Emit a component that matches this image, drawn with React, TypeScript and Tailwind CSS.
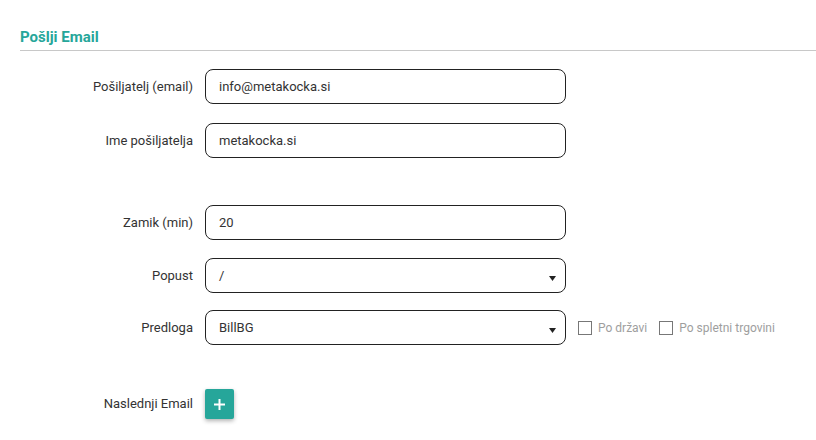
import React from "react";

const font = { fontFamily: "Roboto, 'Noto Sans', sans-serif" };

function Row({ label, children, className = "" }: { label: string; children: React.ReactNode; className?: string }) {
  return (
    <div className={`flex items-center ${className}`}>
      <label className="w-[193px] shrink-0 text-right text-[13px] text-[#333]">{label}</label>
      <div className="ml-[12px] flex items-center">{children}</div>
    </div>
  );
}

function TextBox({ value }: { value: string }) {
  return (
    <div className="flex h-[35px] w-[361px] items-center rounded-[8px] border border-[#222] px-[13px] text-[13px] text-[#333]">
      {value}
    </div>
  );
}

function SelectBox({ value }: { value: string }) {
  return (
    <div className="flex h-[35px] w-[361px] items-center justify-between rounded-[8px] border border-[#222] pl-[13px] pr-[9px] text-[13px] text-[#333]">
      <span>{value}</span>
      <svg width="7" height="5" viewBox="0 0 7 5" className="mt-[5px]">
        <path d="M0 0h7L3.5 5z" fill="#222" />
      </svg>
    </div>
  );
}

function Check({ label }: { label: string }) {
  return (
    <span className="flex items-center gap-[6px] text-[12px] text-[#9e9e9e]">
      <span className="h-[14px] w-[14px] border border-[#777] bg-white" />
      {label}
    </span>
  );
}

export default function App() {
  return (
    <div className="h-[440px] w-[816px] overflow-hidden bg-white" style={font}>
      <div className="pl-[20px] pt-[29px]">
        <h2 className="border-b border-[#c8c8c8] pb-[4px] text-[15px] font-bold leading-[17px] text-[#26a69a]">Pošlji Email</h2>
      </div>
      <div className="flex flex-col pt-[18px]">
        <Row label="Pošiljatelj (email)">
          <TextBox value="info@metakocka.si" />
        </Row>
        <Row label="Ime pošiljatelja" className="mt-[19px]">
          <TextBox value="metakocka.si" />
        </Row>
        <Row label="Zamik (min)" className="mt-[47px]">
          <TextBox value="20" />
        </Row>
        <Row label="Popust" className="mt-[18px]">
          <SelectBox value="/" />
        </Row>
        <Row label="Predloga" className="mt-[17px]">
          <SelectBox value="BillBG" />
          <div className="ml-[12px] flex items-center gap-[12px]">
            <Check label="Po državi" />
            <Check label="Po spletni trgovini" />
          </div>
        </Row>
        <Row label="Naslednji Email" className="mt-[44px]">
          <button className="flex h-[30px] w-[29px] items-center justify-center rounded-[2px] bg-[#26a69a] shadow-[0_2px_4px_rgba(0,0,0,0.3)]">
            <svg width="11" height="11" viewBox="0 0 11 11">
              <path d="M5.5 0v11M0 5.5h11" stroke="#fff" strokeWidth="2" />
            </svg>
          </button>
        </Row>
      </div>
    </div>
  );
}
